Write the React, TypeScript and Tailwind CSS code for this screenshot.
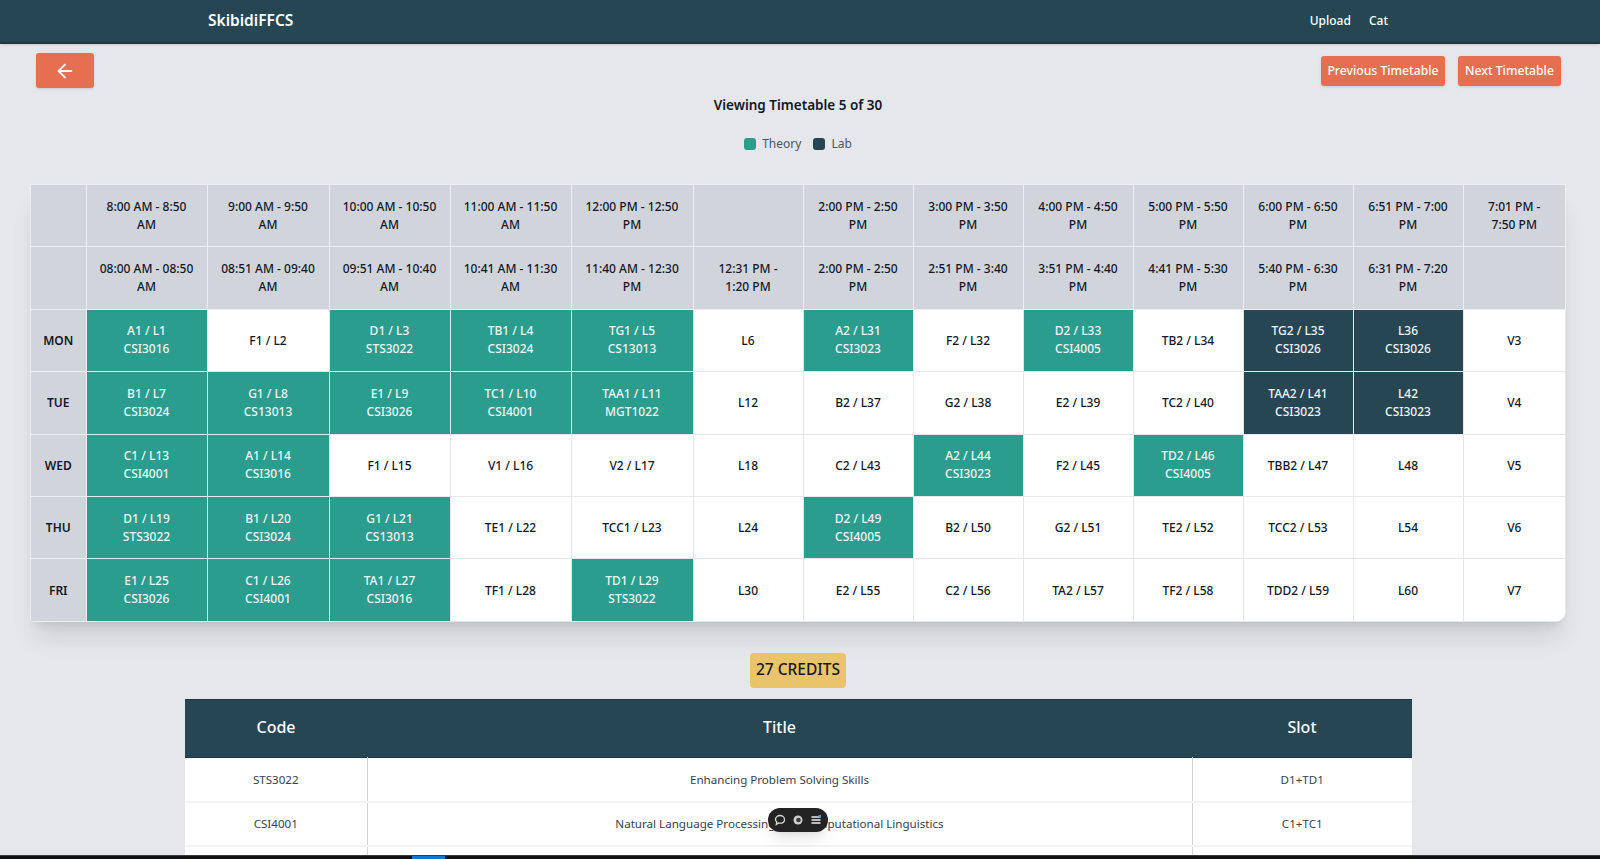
import { ArrowLeft } from "lucide-react";

type Slot = { label: string; code?: string; kind?: "theory" | "lab" };

const t = (label: string, code: string): Slot => ({ label, code, kind: "theory" });
const l = (label: string, code: string): Slot => ({ label, code, kind: "lab" });
const f = (label: string): Slot => ({ label });

const THEORY_TIMES = [
  "8:00 AM - 8:50 AM",
  "9:00 AM - 9:50 AM",
  "10:00 AM - 10:50 AM",
  "11:00 AM - 11:50 AM",
  "12:00 PM - 12:50 PM",
  "",
  "2:00 PM - 2:50 PM",
  "3:00 PM - 3:50 PM",
  "4:00 PM - 4:50 PM",
  "5:00 PM - 5:50 PM",
  "6:00 PM - 6:50 PM",
  "6:51 PM - 7:00 PM",
  "7:01 PM - 7:50 PM",
];

const LAB_TIMES = [
  "08:00 AM - 08:50 AM",
  "08:51 AM - 09:40 AM",
  "09:51 AM - 10:40 AM",
  "10:41 AM - 11:30 AM",
  "11:40 AM - 12:30 PM",
  "12:31 PM - 1:20 PM",
  "2:00 PM - 2:50 PM",
  "2:51 PM - 3:40 PM",
  "3:51 PM - 4:40 PM",
  "4:41 PM - 5:30 PM",
  "5:40 PM - 6:30 PM",
  "6:31 PM - 7:20 PM",
  "",
];

const GRID: { day: string; slots: Slot[] }[] = [
  {
    day: "MON",
    slots: [
      t("A1 / L1", "CSI3016"), f("F1 / L2"), t("D1 / L3", "STS3022"), t("TB1 / L4", "CSI3024"), t("TG1 / L5", "CS13013"), f("L6"),
      t("A2 / L31", "CSI3023"), f("F2 / L32"), t("D2 / L33", "CSI4005"), f("TB2 / L34"), l("TG2 / L35", "CSI3026"), l("L36", "CSI3026"), f("V3"),
    ],
  },
  {
    day: "TUE",
    slots: [
      t("B1 / L7", "CSI3024"), t("G1 / L8", "CS13013"), t("E1 / L9", "CSI3026"), t("TC1 / L10", "CSI4001"), t("TAA1 / L11", "MGT1022"), f("L12"),
      f("B2 / L37"), f("G2 / L38"), f("E2 / L39"), f("TC2 / L40"), l("TAA2 / L41", "CSI3023"), l("L42", "CSI3023"), f("V4"),
    ],
  },
  {
    day: "WED",
    slots: [
      t("C1 / L13", "CSI4001"), t("A1 / L14", "CSI3016"), f("F1 / L15"), f("V1 / L16"), f("V2 / L17"), f("L18"),
      f("C2 / L43"), t("A2 / L44", "CSI3023"), f("F2 / L45"), t("TD2 / L46", "CSI4005"), f("TBB2 / L47"), f("L48"), f("V5"),
    ],
  },
  {
    day: "THU",
    slots: [
      t("D1 / L19", "STS3022"), t("B1 / L20", "CSI3024"), t("G1 / L21", "CS13013"), f("TE1 / L22"), f("TCC1 / L23"), f("L24"),
      t("D2 / L49", "CSI4005"), f("B2 / L50"), f("G2 / L51"), f("TE2 / L52"), f("TCC2 / L53"), f("L54"), f("V6"),
    ],
  },
  {
    day: "FRI",
    slots: [
      t("E1 / L25", "CSI3026"), t("C1 / L26", "CSI4001"), t("TA1 / L27", "CSI3016"), f("TF1 / L28"), t("TD1 / L29", "STS3022"), f("L30"),
      f("E2 / L55"), f("C2 / L56"), f("TA2 / L57"), f("TF2 / L58"), f("TDD2 / L59"), f("L60"), f("V7"),
    ],
  },
];

const COURSES = [
  { code: "STS3022", title: "Enhancing Problem Solving Skills", slot: "D1+TD1" },
  { code: "CSI4001", title: "Natural Language Processing and Computational Linguistics", slot: "C1+TC1" },
];

function TimeRow({ times }: { times: string[] }) {
  return (
    <tr className="h-[62.4px] bg-[#d1d5db] text-[#111827]">
      <th className="border border-[#eceef1]" />
      {times.map((time, i) => (
        <th key={i} className="border border-[#eceef1] px-3 text-center text-[12px] leading-[18px] font-medium">
          {time}
        </th>
      ))}
    </tr>
  );
}

function SlotCell({ slot }: { slot: Slot }) {
  if (slot.kind) {
    return (
      <td
        className={
          slot.kind === "theory"
            ? "border border-[#e5e7eb] bg-[#2a9d8f] text-center text-[12px] leading-[18px] font-medium text-[#f1f5f4]"
            : "border border-[#e5e7eb] bg-[#264653] text-center text-[12px] leading-[18px] font-medium text-[#f1f5f4]"
        }
      >
        {slot.label}
        <br />
        {slot.code}
      </td>
    );
  }
  return (
    <td className="border border-[#e5e7eb] bg-white pt-px text-center text-[12px] leading-[18px] font-medium text-[#111827]">
      {slot.label}
    </td>
  );
}

function ChatPill() {
  return (
    <div className="absolute top-[808px] left-[768px] flex h-[24px] w-[60px] items-center justify-center gap-[6px] rounded-full bg-[#232323] shadow-lg">
      <svg width="12" height="12" viewBox="0 0 12 12" fill="none" stroke="#d8d8d8" strokeWidth="1.3">
        <path d="M6 1.5c2.6 0 4.5 1.7 4.5 3.9S8.6 9.2 6 9.2c-.6 0-1.100-.1-1.600-.2L2.300 10.500l.4-2.500C2 7.300 1.500 6.400 1.500 5.400 1.500 3.200 3.400 1.500 6 1.500z" />
      </svg>
      <svg width="12" height="12" viewBox="0 0 12 12" fill="none">
        <circle cx="6" cy="6" r="4.500" fill="#cfcfcf" />
        <circle cx="6.500" cy="6" r="2.300" fill="#3a3a3a" />
      </svg>
      <svg width="12" height="12" viewBox="0 0 12 12" fill="#bdbdbd">
        <rect x="1.500" y="2" width="9" height="2" />
        <rect x="1.500" y="5" width="9" height="2" />
        <rect x="1.500" y="8" width="9" height="2" />
        <rect x="8.500" y="1" width="2.500" height="2.500" fill="#4a9be8" />
      </svg>
    </div>
  );
}

export default function App() {
  return (
    <div className="relative h-[859px] overflow-hidden bg-[#e5e7eb] font-['Noto_Sans',sans-serif] text-[#111827]">
      <nav className="flex h-11 items-center justify-between border-b-2 border-[#1d3744] bg-[#264653] pr-[212px] pl-[208px] text-white shadow">
        <span className="text-[15.5px] font-semibold">SkibidiFFCS</span>
        <div className="flex gap-[18px] text-[12px] font-medium">
          <span>Upload</span>
          <span>Cat</span>
        </div>
      </nav>

      <div className="flex items-center justify-between pt-[9px] pr-[39px] pl-9">
        <button className="flex h-[35px] w-[58px] items-center justify-center rounded-[3px] bg-[#e76f51] text-white shadow-sm">
          <ArrowLeft size={22} strokeWidth={2} />
        </button>
        <div className="flex gap-[13px]">
          <button className="h-[30px] w-[124px] rounded-[3px] bg-[#e76f51] pt-px text-[12.2px] font-medium text-white shadow-sm">
            Previous Timetable
          </button>
          <button className="h-[30px] w-[103px] rounded-[3px] bg-[#e76f51] pt-px text-[12.2px] font-medium text-white shadow-sm">
            Next Timetable
          </button>
        </div>
      </div>

      <h2 className="mt-[7px] pr-1 text-center text-[13.5px] leading-5 font-semibold">Viewing Timetable 5 of 30</h2>

      <div className="mt-[21px] flex h-4 items-center justify-center gap-3 pr-1 text-[12px] text-[#4b5563]">
        <div className="flex items-center gap-[6px]">
          <span className="size-3 rounded-[3px] bg-[#2a9d8f]" />
          Theory
        </div>
        <div className="flex items-center gap-[6px]">
          <span className="size-3 rounded-[3px] bg-[#264653]" />
          Lab
        </div>
      </div>

      <div className="mt-[32px] mr-[34px] ml-[30px] overflow-hidden rounded-br-xl rounded-bl-sm shadow-xl">
        <table className="w-full table-fixed border-collapse">
          <colgroup>
            <col className="w-[55.5px]" />
            <col className="w-[121px]" />
            <col className="w-[122px]" />
            <col className="w-[121px]" />
            <col className="w-[121px]" />
            <col className="w-[122px]" />
            <col className="w-[110px]" />
            <col className="w-[110px]" />
            <col className="w-[110px]" />
            <col className="w-[110px]" />
            <col className="w-[110px]" />
            <col className="w-[110px]" />
            <col className="w-[110px]" />
            <col />
          </colgroup>
          <thead>
            <TimeRow times={THEORY_TIMES} />
            <TimeRow times={LAB_TIMES} />
          </thead>
          <tbody>
            {GRID.map((row) => (
              <tr key={row.day} className="h-[62.4px]">
                <th className="border border-[#eceef1] bg-[#d1d5db] pt-px text-[12px] font-semibold">{row.day}</th>
                {row.slots.map((slot, i) => (
                  <SlotCell key={i} slot={slot} />
                ))}
              </tr>
            ))}
          </tbody>
        </table>
      </div>

      <div className="mt-[31px] flex justify-center pr-1">
        <span className="flex h-[35px] w-[96px] items-center justify-center rounded-[4px] bg-[#e9c46a] pb-[2px] text-[15.5px] font-medium whitespace-nowrap">
          27 CREDITS
        </span>
      </div>

      <table className="mt-[11px] ml-[185px] w-[1227px] table-fixed border-collapse">
        <colgroup>
          <col className="w-[182px]" />
          <col className="w-[825px]" />
          <col />
        </colgroup>
        <thead>
          <tr className="h-[58px] border-y border-[#1d3744] bg-[#264653] text-[16px] font-medium text-white">
            <th className="pb-[2px] font-medium">Code</th>
            <th className="pb-[2px] font-medium">Title</th>
            <th className="pb-[2px] font-medium">Slot</th>
          </tr>
        </thead>
        <tbody className="bg-white text-center text-[11.6px] text-[#374151]">
          {COURSES.map((c) => (
            <tr key={c.code} className="h-[44.500px] border-b-2 border-[#f3f4f6]">
              <td className="border-r border-[#d1d5db]">{c.code}</td>
              <td className="border-r border-[#d1d5db]">{c.title}</td>
              <td>{c.slot}</td>
            </tr>
          ))}
          <tr className="h-[44px]">
            <td className="border-r border-[#d1d5db]" />
            <td className="border-r border-[#d1d5db]" />
            <td />
          </tr>
        </tbody>
      </table>

      <ChatPill />

      <div className="absolute inset-x-0 bottom-0 h-1 border-t border-[#3a3a3a] bg-[#111111]">
        <div className="absolute top-0 left-[412px] h-[3px] w-[33px] bg-[#0a78d4]" />
      </div>
    </div>
  );
}
